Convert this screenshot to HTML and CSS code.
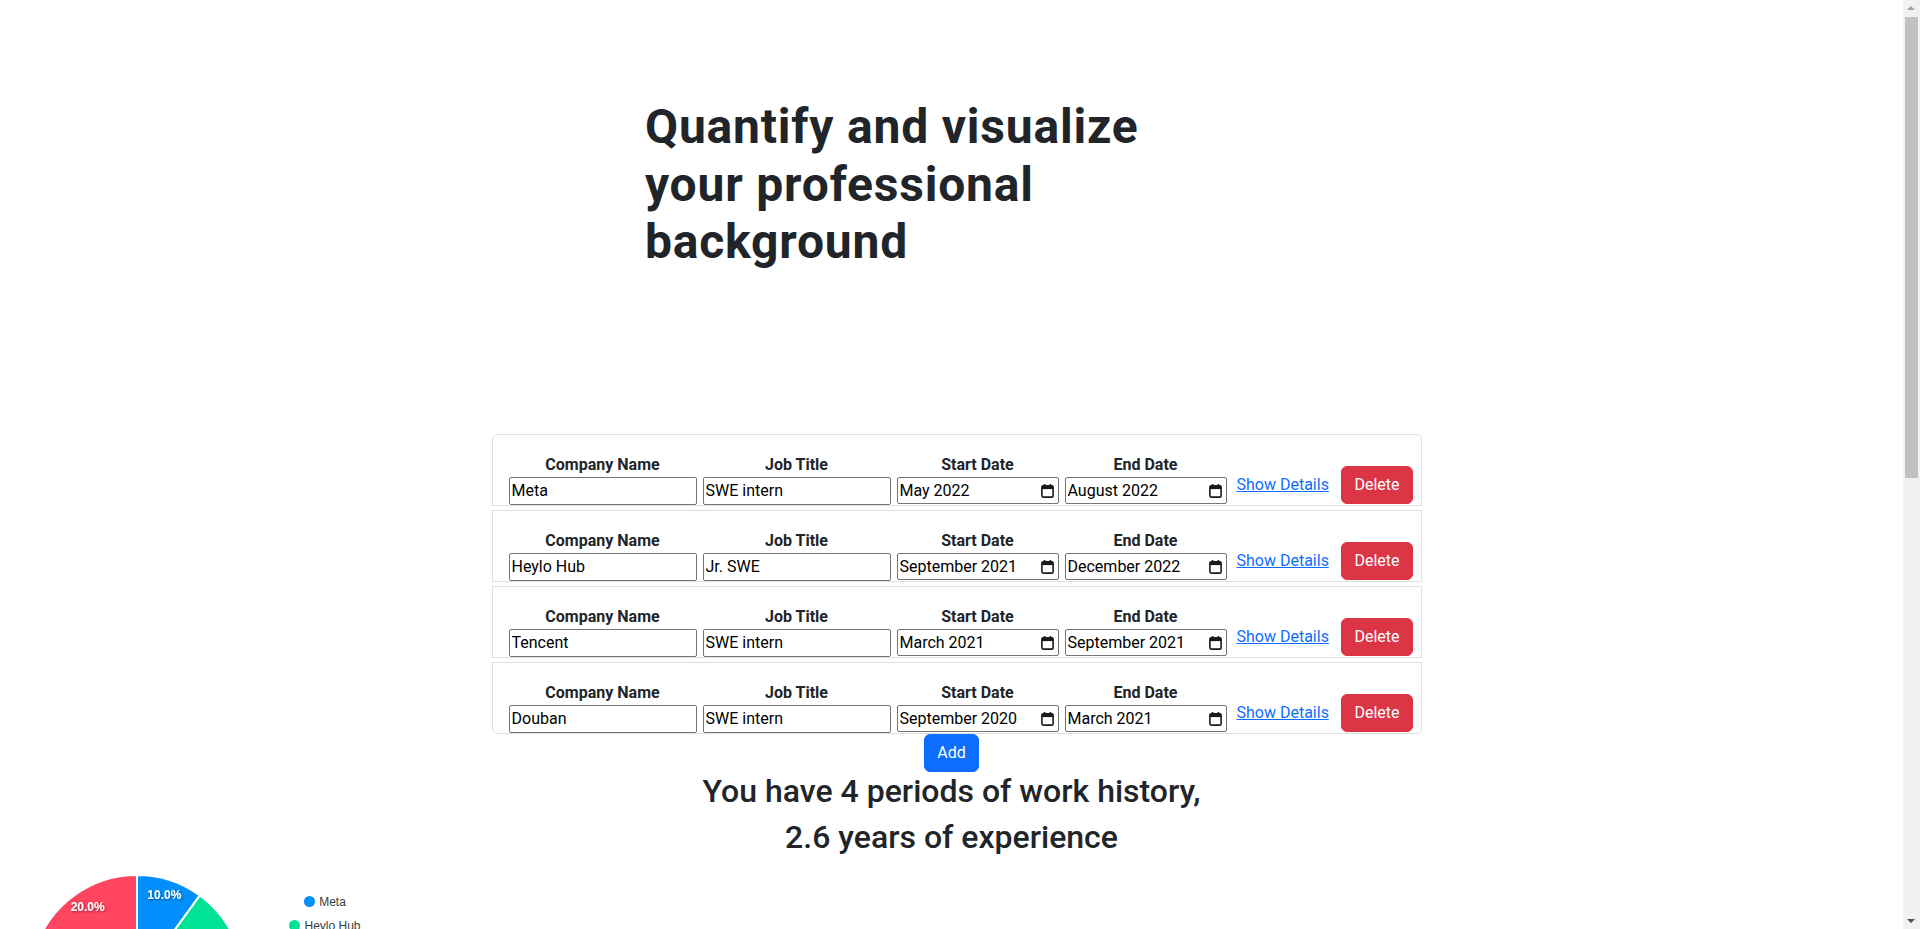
FILE: index.html
```html
<!DOCTYPE html>
<html lang="en">
<head>
<meta charset="utf-8">
<title>Work History</title>
<link rel="stylesheet" href="styles.css">
</head>
<body>
<main class="page">
  <section class="hero">
    <div class="hero-inner">
      <h1 class="hero-title">Quantify and visualize your professional background</h1>
    </div>
  </section>

  <section class="history">
    <div class="history-list">
      <div class="job-card">
        <div class="field field-text">
          <label class="field-label">Company Name</label>
          <input class="field-input" type="text" value="Meta">
        </div>
        <div class="field field-text">
          <label class="field-label">Job Title</label>
          <input class="field-input" type="text" value="SWE intern">
        </div>
        <div class="field field-date">
          <label class="field-label">Start Date</label>
          <div class="date-box">
            <input class="field-input date-input" type="text" value="May 2022">
            <svg class="cal-icon" width="13" height="14" viewBox="0 0 13 14"><rect x="0.9" y="1.9" width="11.2" height="11.2" rx="1.4" fill="none" stroke="#1a1a1a" stroke-width="1.6"/><rect x="0.9" y="1.9" width="11.2" height="3.2" fill="#1a1a1a"/><rect x="2.8" y="0" width="1.6" height="2.4" fill="#1a1a1a"/><rect x="8.6" y="0" width="1.6" height="2.4" fill="#1a1a1a"/></svg>
          </div>
        </div>
        <div class="field field-date">
          <label class="field-label">End Date</label>
          <div class="date-box">
            <input class="field-input date-input" type="text" value="August 2022">
            <svg class="cal-icon" width="13" height="14" viewBox="0 0 13 14"><rect x="0.9" y="1.9" width="11.2" height="11.2" rx="1.4" fill="none" stroke="#1a1a1a" stroke-width="1.6"/><rect x="0.9" y="1.9" width="11.2" height="3.2" fill="#1a1a1a"/><rect x="2.8" y="0" width="1.6" height="2.4" fill="#1a1a1a"/><rect x="8.6" y="0" width="1.6" height="2.4" fill="#1a1a1a"/></svg>
          </div>
        </div>
        <a class="details-link" href="#">Show Details</a>
        <button class="btn btn-danger" type="button">Delete</button>
      </div>

      <div class="job-card">
        <div class="field field-text">
          <label class="field-label">Company Name</label>
          <input class="field-input" type="text" value="Heylo Hub">
        </div>
        <div class="field field-text">
          <label class="field-label">Job Title</label>
          <input class="field-input" type="text" value="Jr. SWE">
        </div>
        <div class="field field-date">
          <label class="field-label">Start Date</label>
          <div class="date-box">
            <input class="field-input date-input" type="text" value="September 2021">
            <svg class="cal-icon" width="13" height="14" viewBox="0 0 13 14"><rect x="0.9" y="1.9" width="11.2" height="11.2" rx="1.4" fill="none" stroke="#1a1a1a" stroke-width="1.6"/><rect x="0.9" y="1.9" width="11.2" height="3.2" fill="#1a1a1a"/><rect x="2.8" y="0" width="1.6" height="2.4" fill="#1a1a1a"/><rect x="8.6" y="0" width="1.6" height="2.4" fill="#1a1a1a"/></svg>
          </div>
        </div>
        <div class="field field-date">
          <label class="field-label">End Date</label>
          <div class="date-box">
            <input class="field-input date-input" type="text" value="December 2022">
            <svg class="cal-icon" width="13" height="14" viewBox="0 0 13 14"><rect x="0.9" y="1.9" width="11.2" height="11.2" rx="1.4" fill="none" stroke="#1a1a1a" stroke-width="1.6"/><rect x="0.9" y="1.9" width="11.2" height="3.2" fill="#1a1a1a"/><rect x="2.8" y="0" width="1.6" height="2.4" fill="#1a1a1a"/><rect x="8.6" y="0" width="1.6" height="2.4" fill="#1a1a1a"/></svg>
          </div>
        </div>
        <a class="details-link" href="#">Show Details</a>
        <button class="btn btn-danger" type="button">Delete</button>
      </div>

      <div class="job-card">
        <div class="field field-text">
          <label class="field-label">Company Name</label>
          <input class="field-input" type="text" value="Tencent">
        </div>
        <div class="field field-text">
          <label class="field-label">Job Title</label>
          <input class="field-input" type="text" value="SWE intern">
        </div>
        <div class="field field-date">
          <label class="field-label">Start Date</label>
          <div class="date-box">
            <input class="field-input date-input" type="text" value="March 2021">
            <svg class="cal-icon" width="13" height="14" viewBox="0 0 13 14"><rect x="0.9" y="1.9" width="11.2" height="11.2" rx="1.4" fill="none" stroke="#1a1a1a" stroke-width="1.6"/><rect x="0.9" y="1.9" width="11.2" height="3.2" fill="#1a1a1a"/><rect x="2.8" y="0" width="1.6" height="2.4" fill="#1a1a1a"/><rect x="8.6" y="0" width="1.6" height="2.4" fill="#1a1a1a"/></svg>
          </div>
        </div>
        <div class="field field-date">
          <label class="field-label">End Date</label>
          <div class="date-box">
            <input class="field-input date-input" type="text" value="September 2021">
            <svg class="cal-icon" width="13" height="14" viewBox="0 0 13 14"><rect x="0.9" y="1.9" width="11.2" height="11.2" rx="1.4" fill="none" stroke="#1a1a1a" stroke-width="1.6"/><rect x="0.9" y="1.9" width="11.2" height="3.2" fill="#1a1a1a"/><rect x="2.8" y="0" width="1.6" height="2.4" fill="#1a1a1a"/><rect x="8.6" y="0" width="1.6" height="2.4" fill="#1a1a1a"/></svg>
          </div>
        </div>
        <a class="details-link" href="#">Show Details</a>
        <button class="btn btn-danger" type="button">Delete</button>
      </div>

      <div class="job-card">
        <div class="field field-text">
          <label class="field-label">Company Name</label>
          <input class="field-input" type="text" value="Douban">
        </div>
        <div class="field field-text">
          <label class="field-label">Job Title</label>
          <input class="field-input" type="text" value="SWE intern">
        </div>
        <div class="field field-date">
          <label class="field-label">Start Date</label>
          <div class="date-box">
            <input class="field-input date-input" type="text" value="September 2020">
            <svg class="cal-icon" width="13" height="14" viewBox="0 0 13 14"><rect x="0.9" y="1.9" width="11.2" height="11.2" rx="1.4" fill="none" stroke="#1a1a1a" stroke-width="1.6"/><rect x="0.9" y="1.9" width="11.2" height="3.2" fill="#1a1a1a"/><rect x="2.8" y="0" width="1.6" height="2.4" fill="#1a1a1a"/><rect x="8.6" y="0" width="1.6" height="2.4" fill="#1a1a1a"/></svg>
          </div>
        </div>
        <div class="field field-date">
          <label class="field-label">End Date</label>
          <div class="date-box">
            <input class="field-input date-input" type="text" value="March 2021">
            <svg class="cal-icon" width="13" height="14" viewBox="0 0 13 14"><rect x="0.9" y="1.9" width="11.2" height="11.2" rx="1.4" fill="none" stroke="#1a1a1a" stroke-width="1.6"/><rect x="0.9" y="1.9" width="11.2" height="3.2" fill="#1a1a1a"/><rect x="2.8" y="0" width="1.6" height="2.4" fill="#1a1a1a"/><rect x="8.6" y="0" width="1.6" height="2.4" fill="#1a1a1a"/></svg>
          </div>
        </div>
        <a class="details-link" href="#">Show Details</a>
        <button class="btn btn-danger" type="button">Delete</button>
      </div>
    </div>
    <button class="btn btn-primary add-btn" type="button">Add</button>
  </section>

  <section class="summary">
    <h2 class="summary-line">You have 4 periods of work history,</h2>
    <h2 class="summary-line">2.6 years of experience</h2>
  </section>

  <section class="chart">
    <svg class="pie" width="274" height="260" viewBox="0 0 274 260" xmlns="http://www.w3.org/2000/svg">
      <defs>
        <filter id="lblShadow" x="-20%" y="-40%" width="140%" height="180%">
          <feDropShadow dx="1" dy="1" stdDeviation="1" flood-color="#000" flood-opacity="0.45"/>
        </filter>
      </defs>
      <g stroke="#ffffff" stroke-width="2" stroke-linejoin="round">
        <path d="M137,117 L137,10 A107,107 0 0 1 199.89,30.43 Z" fill="#008FFB"/>
        <path d="M137,117 L199.89,30.43 A107,107 0 0 1 74.11,203.57 Z" fill="#00E396"/>
        <path d="M137,117 L74.11,203.57 A107,107 0 0 1 35.24,83.93 Z" fill="#FEB019"/>
        <path d="M137,117 L35.24,83.93 A107,107 0 0 1 137,10 Z" fill="#FF4560"/>
      </g>
      <g class="pie-labels" filter="url(#lblShadow)">
        <text x="164.3" y="34" text-anchor="middle">10.0%</text>
        <text x="210.6" y="174.5" text-anchor="middle">50.0%</text>
        <text x="50.5" y="149" text-anchor="middle">20.0%</text>
        <text x="87.7" y="46" text-anchor="middle">20.0%</text>
      </g>
    </svg>
    <ul class="legend">
      <li class="legend-item"><span class="marker marker-blue"></span><span>Meta</span></li>
      <li class="legend-item"><span class="marker marker-green"></span><span>Heylo Hub</span></li>
      <li class="legend-item"><span class="marker marker-yellow"></span><span>Tencent</span></li>
      <li class="legend-item"><span class="marker marker-red"></span><span>Douban</span></li>
    </ul>
  </section>

  <section class="more-charts"></section>
</main>

<div class="scrollbar" aria-hidden="true">
  <span class="sb-arrow sb-up"></span>
  <span class="sb-thumb"></span>
  <span class="sb-arrow sb-down"></span>
</div>
</body>
</html>
```

FILE: styles.css
```css
html, body {
  margin: 0;
  padding: 0;
}

body {
  font-family: "Segoe UI", Roboto, "Noto Sans", sans-serif;
  font-size: 16px;
  line-height: 1.5;
  color: #212529;
  background: #ffffff;
}

.page {
  display: flex;
  flex-direction: column;
  margin-right: 17px;
}

/* Hero */
.hero {
  padding-top: 98px;
}

.hero-inner {
  width: 613px;
  margin: 0 auto;
}

.hero-title {
  margin: 0;
  max-width: 560px;
  font-size: 48px;
  line-height: 57.6px;
  font-weight: 700;
  letter-spacing: 0.8px;
  color: #212529;
}

/* Work history */
.history {
  margin-top: 163px;
  display: flex;
  flex-direction: column;
  align-items: center;
}

.history-list {
  width: 930px;
  margin-left: 10px;
  display: flex;
  flex-direction: column;
  gap: 4px;
}

.job-card {
  box-sizing: border-box;
  height: 72px;
  display: flex;
  align-items: flex-start;
  gap: 6px;
  padding: 18px 8px 0 16px;
  border: 1px solid #dfdfdf;
  background: #ffffff;
}

.job-card:first-child {
  border-radius: 6px 6px 0 0;
}

.job-card:last-child {
  border-radius: 0 0 6px 6px;
}

.field {
  display: flex;
  flex-direction: column;
  flex: none;
}

.field-text {
  width: 188px;
}

.field-date {
  width: 162px;
}

.field-label {
  text-align: center;
  font-weight: 700;
  line-height: 24px;
  white-space: nowrap;
}

.field-input {
  box-sizing: border-box;
  width: 100%;
  height: 28px;
  margin: 0;
  padding: 1px 2px;
  border: 1px solid #767676;
  border-radius: 2px;
  font-family: inherit;
  font-size: 16px;
  line-height: 24px;
  color: #000000;
  background: #ffffff;
}

.date-box {
  position: relative;
  height: 27px;
}

.date-input {
  height: 27px;
  padding: 0 24px 0 2px;
}

.cal-icon {
  position: absolute;
  right: 5px;
  top: 7px;
}

.details-link {
  flex: none;
  align-self: flex-end;
  margin-left: 4px;
  margin-bottom: 1px;
  line-height: 38px;
  white-space: nowrap;
  color: #0d6efd;
  text-decoration: underline;
}

.btn {
  box-sizing: border-box;
  font-family: inherit;
  font-size: 16px;
  line-height: 24px;
  padding: 6px 12px;
  border: 1px solid transparent;
  border-radius: 6px;
  color: #ffffff;
  cursor: pointer;
}

.btn-danger {
  flex: none;
  align-self: flex-end;
  margin-left: auto;
  margin-bottom: 1px;
  background: #dc3545;
  border-color: #dc3545;
}

.btn-primary {
  background: #0d6efd;
  border-color: #0d6efd;
}

/* Summary */
.summary {
  text-align: center;
}

.summary-line {
  margin: 0 0 8px;
  font-size: 32px;
  font-weight: 500;
  line-height: 1.2;
  color: #212529;
}

/* Chart */
.chart {
  display: flex;
  align-items: flex-start;
  height: 260px;
}

.pie {
  display: block;
  flex: none;
}

.pie-labels {
  font-family: "Liberation Sans", Arial, sans-serif;
  font-size: 12px;
  font-weight: 700;
  fill: #ffffff;
}

.legend {
  list-style: none;
  margin: 0;
  padding: 25px 0 0;
  width: 102px;
  display: flex;
  flex-direction: column;
  align-items: center;
}

.legend-item {
  display: flex;
  align-items: center;
  gap: 4px;
  height: 24px;
  font-family: "Liberation Sans", Arial, sans-serif;
  font-size: 12px;
  color: #373d3f;
}

.marker {
  width: 11px;
  height: 11px;
  border-radius: 50%;
  flex: none;
}

.marker-blue { background: #008FFB; }
.marker-green { background: #00E396; }
.marker-yellow { background: #FEB019; }
.marker-red { background: #FF4560; }

.more-charts {
  height: 678px;
}

/* Window scrollbar (drawn over the page edge) */
.scrollbar {
  position: fixed;
  top: 0;
  right: 0;
  width: 17px;
  height: 100vh;
  background: #f1f1f1;
}

.sb-thumb {
  position: absolute;
  left: 2px;
  top: 17px;
  width: 13px;
  height: 461px;
  background: #c1c1c1;
}

.sb-arrow {
  position: absolute;
  left: 4px;
  width: 0;
  height: 0;
  border-left: 4.5px solid transparent;
  border-right: 4.5px solid transparent;
}

.sb-up {
  top: 6px;
  border-bottom: 4px solid #a3a3a3;
}

.sb-down {
  bottom: 6px;
  border-top: 4px solid #505050;
}
```
